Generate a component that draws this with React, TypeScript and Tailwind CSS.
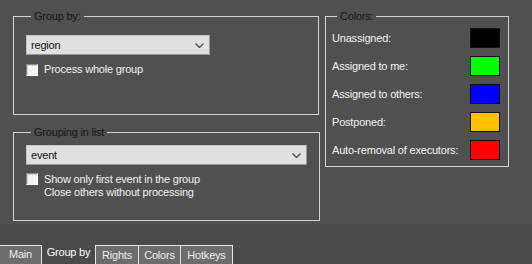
import React from "react";

function Chevron() {
  return (
    <svg width="9" height="5" viewBox="0 0 9 5" className="shrink-0">
      <path d="M0.5 0.5 L4.5 4.5 L8.5 0.5" fill="none" stroke="#4a4a4a" strokeWidth="1.3" />
    </svg>
  );
}

function Select({ value, width }: { value: string; width: string }) {
  return (
    <div
      className={`${width} h-[20px] flex items-center justify-between pl-[4px] pr-[5px] bg-[#e0e0e0] border border-t-[#c4c4c4] border-l-[#c4c4c4] border-r-[#9a9a9a] border-b-[#9a9a9a] text-[#111]`}
    >
      <span>{value}</span>
      <Chevron />
    </div>
  );
}

function Checkbox() {
  return (
    <div className="w-[12px] h-[12px] shrink-0 border border-t-[#8a8a8a] border-l-[#8a8a8a] border-r-white border-b-white bg-[#f4f4f4] shadow-[inset_1px_1px_0_#d0d0d0]" />
  );
}

function Swatch({ color }: { color: string }) {
  return <div className={`w-[30px] h-[20px] border border-[#111] ${color}`} />;
}

const colorRows: { label: string; color: string }[] = [
  { label: "Unassigned:", color: "bg-[#000000]" },
  { label: "Assigned to me:", color: "bg-[#00ff00]" },
  { label: "Assigned to others:", color: "bg-[#0000ff]" },
  { label: "Postponed:", color: "bg-[#ffc000]" },
  { label: "Auto-removal of executors:", color: "bg-[#ff0000]" },
];

export default function App() {
  return (
    <div
      className="w-[532px] h-[264px] bg-[#505050] text-[11px] leading-[13px] tracking-[-0.2px] text-[#f2f2f2] flex flex-col overflow-hidden"
      style={{ fontFamily: '"Liberation Sans", Arial, sans-serif' }}
    >
      <div className="h-[224px] flex gap-[6px] pl-[13px] pt-[10px]">
        <div className="w-[306px] flex flex-col gap-[11px]">
          <fieldset className="h-[105px] border border-[#d4d4d4] px-[12px]">
            <legend className="ml-[5px] px-[3px] text-[#161616]">Group by:</legend>
            <div className="mt-[12px]">
              <Select value="region" width="w-[184px]" />
            </div>
            <div className="mt-[9px] flex items-start gap-[6px]">
              <Checkbox />
              <span className="mt-[-1px]">Process whole group</span>
            </div>
          </fieldset>
          <fieldset className="h-[95px] border border-[#d4d4d4] px-[12px]">
            <legend className="ml-[5px] px-[3px] text-[#161616]">Grouping in list</legend>
            <div className="mt-[6px]">
              <Select value="event" width="w-[281px]" />
            </div>
            <div className="mt-[8px] flex items-start gap-[6px]">
              <Checkbox />
              <span className="mt-[0px]">
                Show only first event in the group
                <br />
                Close others without processing
              </span>
            </div>
          </fieldset>
        </div>
        <fieldset className="w-[184px] h-[157px] border border-[#d4d4d4] pl-[6px] pr-[8px]">
          <legend className="ml-[5px] px-[3px] text-[#161616]">Colors:</legend>
          <div className="mt-[5px] flex flex-col gap-[8px]">
            {colorRows.map((r) => (
              <div key={r.label} className="h-[20px] flex items-center justify-between">
                <span>{r.label}</span>
                <Swatch color={r.color} />
              </div>
            ))}
          </div>
        </fieldset>
      </div>
      <div className="flex-1 bg-[#4a4a4a] flex items-end">
        <div className="flex h-[19px] text-[#ececec]">
          <div className="w-[42px] h-full bg-[#6c6c6c] border-t border-r border-[#e4e4e4] flex items-center justify-center pb-[1px]">
            Main
          </div>
          <div className="w-[53px] h-[21px] -mt-[2px] flex items-start justify-center pt-[3px] text-white">
            Group by
          </div>
          <div className="w-[43px] h-full bg-[#6c6c6c] border-t border-l border-[#e4e4e4] flex items-center justify-center">
            Rights
          </div>
          <div className="w-[42px] h-full bg-[#6c6c6c] border-t border-l border-[#e4e4e4] flex items-center justify-center">
            Colors
          </div>
          <div className="w-[53px] h-full bg-[#6c6c6c] border-t border-l border-r border-[#e4e4e4] flex items-center justify-center">
            Hotkeys
          </div>
        </div>
      </div>
    </div>
  );
}
